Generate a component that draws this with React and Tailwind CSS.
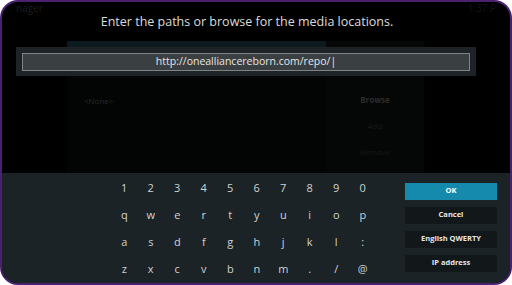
import React from 'react';

const rows = [
  ['1', '2', '3', '4', '5', '6', '7', '8', '9', '0'],
  ['q', 'w', 'e', 'r', 't', 'y', 'u', 'i', 'o', 'p'],
  ['a', 's', 'd', 'f', 'g', 'h', 'j', 'k', 'l', ':'],
  ['z', 'x', 'c', 'v', 'b', 'n', 'm', '.', '/', '@'],
];

const buttons = ['Cancel', 'English QWERTY', 'IP address'];

function App() {
  return (
    <div className="w-[512px] h-[285px] bg-white" style={{ fontFamily: '"Open Sans", "Noto Sans", sans-serif' }}>
      <div className="relative w-full h-full rounded-[18px] border-2 border-[#4a2170] bg-black overflow-hidden flex flex-col">
        {/* dimmed dialog behind the keyboard */}
        <div className="absolute left-[65px] top-[39px] w-[357px] h-[140px] bg-[#030404]">
          <div className="h-[6px] bg-[#0a1a1f]" />
          <div className="absolute left-[17px] top-[54px] text-[8px] text-[#2a2a2a]">&lt;None&gt;</div>
          <div className="absolute left-[259px] top-[0px] w-[98px] h-full bg-[#050606] flex flex-col items-center pt-[53px] gap-[14px] text-[8px]">
            <span className="font-bold text-[#2c2c2c]">Browse</span>
            <span className="text-[#181818]">Add</span>
            <span className="text-[#181818]">Remove</span>
          </div>
        </div>
        <div className="absolute left-[14px] top-[0px] text-[10px] leading-[12px] text-[#1e1e1e]">nager</div>
        <div className="absolute right-[14px] top-[0px] text-[10px] leading-[12px] text-[#141414]">1:37 P</div>

        {/* top area */}
        <div className="relative h-[171px] flex flex-col">
          <div className="pt-[11px] pr-[18px] text-center text-[12.5px] text-[#dcdcdc] leading-[18px]">
            Enter the paths or browse for the media locations.
          </div>
          <div className="mt-[16px] ml-[14px] w-[460px] h-[29px] bg-[#1d2326] px-[6px] flex items-center">
            <div className="w-full h-[18px] bg-[#3a3f42] border border-[#7e8386] flex items-center justify-center text-[10.5px] text-[#e6e6e6]">
              http://onealliancereborn.com/repo/|
            </div>
          </div>
        </div>

        {/* keyboard */}
        <div className="relative flex-1 bg-[#1c2326] flex">
          <div className="ml-[109px] mt-[2px] grid grid-cols-10 w-[265px]">
            {rows.flat().map((k, i) => (
              <div key={i} className="h-[26.5px] flex items-center justify-center text-[11px] text-[#cfd2d3]">
                {k}
              </div>
            ))}
          </div>
          <div className="ml-[29px] mt-[9.5px] w-[92px] flex flex-col gap-[7px]">
            <div className="h-[17px] bg-[#168aad] flex items-center justify-center text-[7.5px] font-bold text-white">OK</div>
            {buttons.map((b) => (
              <div key={b} className="h-[17px] bg-[#12171a] flex items-center justify-center text-[7.5px] font-bold text-[#e8e8e8]">
                {b}
              </div>
            ))}
          </div>
        </div>
      </div>
    </div>
  );
}

export default App;
